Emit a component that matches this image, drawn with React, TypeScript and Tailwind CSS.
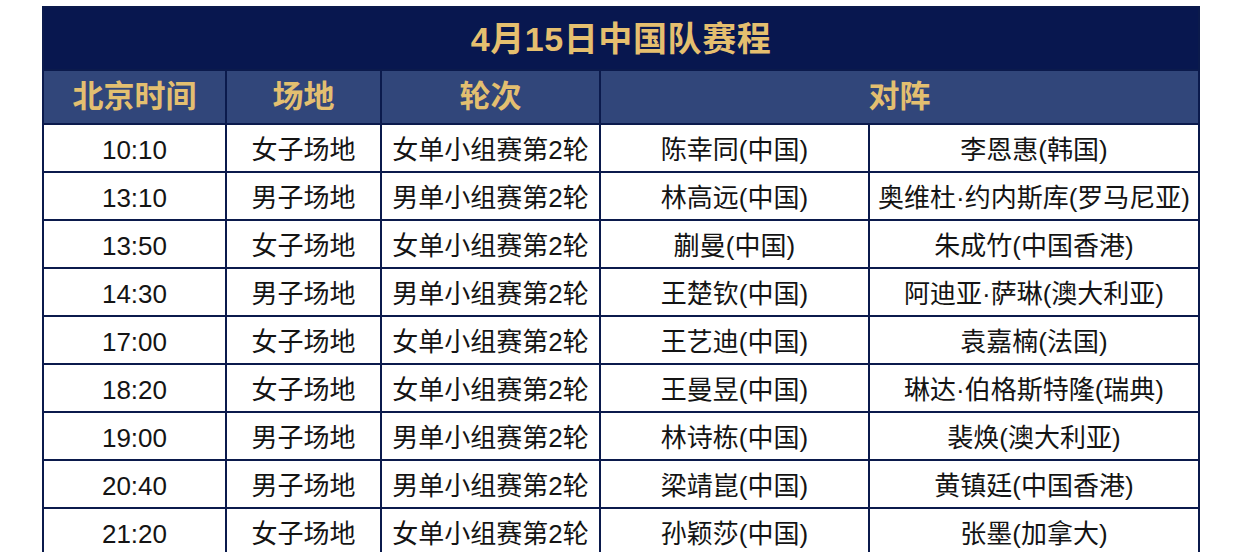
const rows = [
  ["10:10", "女子场地", "女单小组赛第2轮", "陈幸同(中国)", "李恩惠(韩国)"],
  ["13:10", "男子场地", "男单小组赛第2轮", "林高远(中国)", "奥维杜·约内斯库(罗马尼亚)"],
  ["13:50", "女子场地", "女单小组赛第2轮", "蒯曼(中国)", "朱成竹(中国香港)"],
  ["14:30", "男子场地", "男单小组赛第2轮", "王楚钦(中国)", "阿迪亚·萨琳(澳大利亚)"],
  ["17:00", "女子场地", "女单小组赛第2轮", "王艺迪(中国)", "袁嘉楠(法国)"],
  ["18:20", "女子场地", "女单小组赛第2轮", "王曼昱(中国)", "琳达·伯格斯特隆(瑞典)"],
  ["19:00", "男子场地", "男单小组赛第2轮", "林诗栋(中国)", "裴焕(澳大利亚)"],
  ["20:40", "男子场地", "男单小组赛第2轮", "梁靖崑(中国)", "黄镇廷(中国香港)"],
  ["21:20", "女子场地", "女单小组赛第2轮", "孙颖莎(中国)", "张墨(加拿大)"],
]

const headers = ["北京时间", "场地", "轮次"]

export default function App() {
  return (
    <div className="w-[1242px] h-[552px] overflow-hidden bg-white pt-[6px] pl-[42px] font-['Liberation_Sans','Noto_Sans_CJK_SC',sans-serif]">
      <table className="w-[1156px] table-fixed border-collapse border-2 border-[#0b1a4c]">
        <colgroup>
          <col className="w-[183px]" />
          <col className="w-[155px]" />
          <col className="w-[219px]" />
          <col className="w-[269px]" />
          <col className="w-[330px]" />
        </colgroup>
        <thead>
          <tr className="h-[63px] bg-[#08174f]">
            <th
              colSpan={5}
              className="text-[34px] font-bold text-[#e5bf6f] tracking-[0.6px] pt-[1px]"
            >
              4月15日中国队赛程
            </th>
          </tr>
          <tr className="h-[54px] bg-[#31467a]">
            {headers.map((h) => (
              <th key={h} className="border-2 border-[#0b1a4c] text-[31px] font-bold text-[#e3bf70]">
                {h}
              </th>
            ))}
            <th colSpan={2} className="border-2 border-[#0b1a4c] text-[31px] font-bold text-[#e3bf70]">
              对阵
            </th>
          </tr>
        </thead>
        <tbody>
          {rows.map((r, i) => (
            <tr key={i} className="h-[48px]">
              {r.map((c, j) => (
                <td
                  key={j}
                  className="border-2 border-[#0b1a4c] text-center text-[26px] text-[#141414] whitespace-nowrap px-0 pt-[4px] pb-0 leading-[40px]"
                >
                  {c}
                </td>
              ))}
            </tr>
          ))}
        </tbody>
      </table>
    </div>
  )
}
